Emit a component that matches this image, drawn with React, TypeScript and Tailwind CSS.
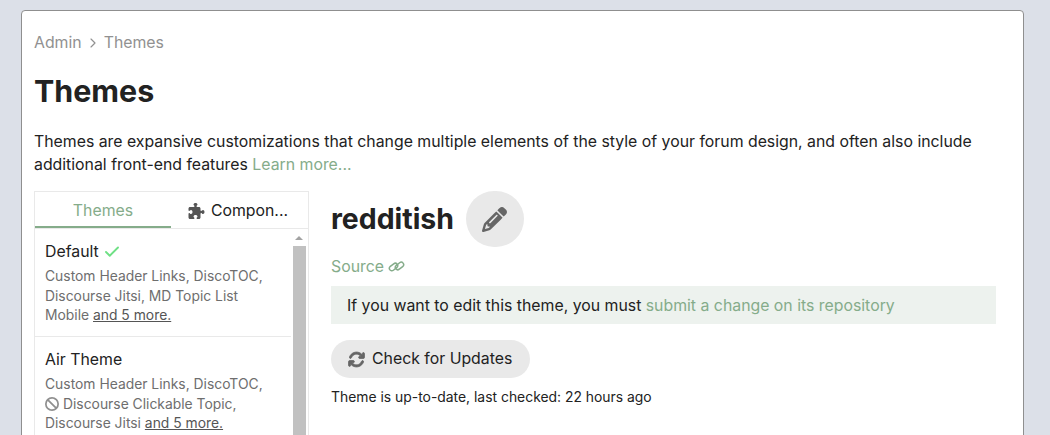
import React from "react";
import { Check, ChevronRight } from "lucide-react";
import { FaArrowsRotate, FaBan, FaPencil, FaPuzzlePiece } from "react-icons/fa6";

const MoreLink = () => <span className="text-[#555] underline">and 5 more.</span>;

export default function App() {
  return (
    <div className="h-[435px] overflow-hidden bg-[#dce0e8] pl-[21px] pt-[10px] font-['Inter',sans-serif] text-[15.84px] text-[#222]">
      <div className="h-[500px] w-[1003px] rounded-[4px] border border-[#8f8f8f] bg-white pl-[12px] pr-[27px] pt-[21px]">
        {/* Breadcrumb */}
        <div className="flex h-[21px] items-center text-[#919191]">
          <span>Admin</span>
          <ChevronRight className="mx-[3px] h-[16px] w-[16px]" strokeWidth={1.75} />
          <span>Themes</span>
        </div>

        <h1 className="mt-[19px] text-[30.4px] font-bold leading-[38px] text-[#222]">Themes</h1>

        <p className="mt-[20px] leading-[23px]">
          Themes are expansive customizations that change multiple elements of the style of your forum design, and often also include
          additional front-end features <span className="text-[#85ac8a]">Learn more...</span>
        </p>

        <div className="mt-[15px] flex">
          {/* Left panel */}
          <div className="h-[300px] w-[275px] shrink-0 border border-[#e9e9e9]">
            <div className="flex h-[37px] border-b border-[#e9e9e9]">
              <div className="flex w-[136px] items-center justify-center border-b-2 border-[#85ac8a] pt-[4px] text-[#85ac8a]">Themes</div>
              <div className="flex flex-1 items-center justify-center gap-[6px] pr-[3px] pt-[2px]">
                <FaPuzzlePiece className="h-[16px] w-[17px] text-[#555]" />
                <span>Compon...</span>
              </div>
            </div>
            <div className="flex">
              <div className="w-[256px] shrink-0">
                <div className="h-[108px] border-b border-[#e9e9e9] px-[10px] pt-[14px]">
                  <div className="flex items-center gap-[4px] leading-[18px]">
                    Default
                    <Check className="h-[18px] w-[18px] text-[#6fe085]" strokeWidth={2.5} />
                  </div>
                  <div className="mt-[6px] text-[13.86px] leading-[19.5px] text-[#6e6e6e]">
                    Custom Header Links, DiscoTOC, Discourse Jitsi, MD Topic List Mobile <MoreLink />
                  </div>
                </div>
                <div className="px-[10px] pt-[14px]">
                  <div className="leading-[18px]">Air Theme</div>
                  <div className="mt-[6px] text-[13.86px] leading-[19.5px] text-[#6e6e6e]">
                    Custom Header Links, DiscoTOC,
                    <br />
                    <FaBan className="mr-[4px] inline h-[14px] w-[14px] align-[-2px] text-[#8f8f8f]" />
                    Discourse Clickable Topic, Discourse Jitsi <MoreLink />
                  </div>
                </div>
              </div>
              {/* Scrollbar */}
              <div className="flex w-[16px] flex-col items-center">
                <div className="flex h-[17px] w-full items-center justify-center">
                  <div className="h-0 w-0 border-x-[4px] border-b-[4px] border-x-transparent border-b-[#a3a3a3]" />
                </div>
                <div className="h-[200px] w-[13px] bg-[#c1c1c1]" />
              </div>
            </div>
          </div>

          {/* Right panel */}
          <div className="ml-[22px] flex-1">
            <div className="flex items-center">
              <h2 className="text-[28.4px] font-bold leading-[56px] text-[#222]">redditish</h2>
              <div className="ml-[12px] flex h-[56px] w-[58px] items-center justify-center rounded-full bg-[#e9e9e9]">
                <FaPencil className="h-[25px] w-[25px] text-[#666]" />
              </div>
            </div>
            <div className="mt-[8px] flex items-center gap-[4px] leading-[23px] text-[#85ac8a]">
              Source
              <svg viewBox="0 0 16 12" className="h-[13px] w-[17px]" fill="none" stroke="currentColor" strokeWidth="1.4">
                <rect x="0.9" y="4.2" width="8.6" height="4.6" rx="2.3" transform="rotate(-38 5.2 6.5)" />
                <rect x="6.5" y="3.2" width="8.6" height="4.6" rx="2.3" transform="rotate(-38 10.8 5.5)" />
              </svg>
            </div>
            <div className="mt-[8px] flex h-[38px] items-center bg-[#edf2ee] px-[16px] pt-px">
              <span>
                If you want to edit this theme, you must <span className="text-[#85ac8a]">submit a change on its repository</span>
              </span>
            </div>
            <button className="mt-[16px] flex h-[38px] items-center gap-[7px] rounded-full bg-[#e9e9e9] pl-[17px] pr-[18px]">
              <FaArrowsRotate className="h-[17px] w-[17px] stroke-[#666] stroke-[24px] text-[#666]" />
              Check for Updates
            </button>
            <div className="mt-[10px] text-[13.9px] leading-[19px]">Theme is up-to-date, last checked: 22 hours ago</div>
          </div>
        </div>
      </div>
    </div>
  );
}
